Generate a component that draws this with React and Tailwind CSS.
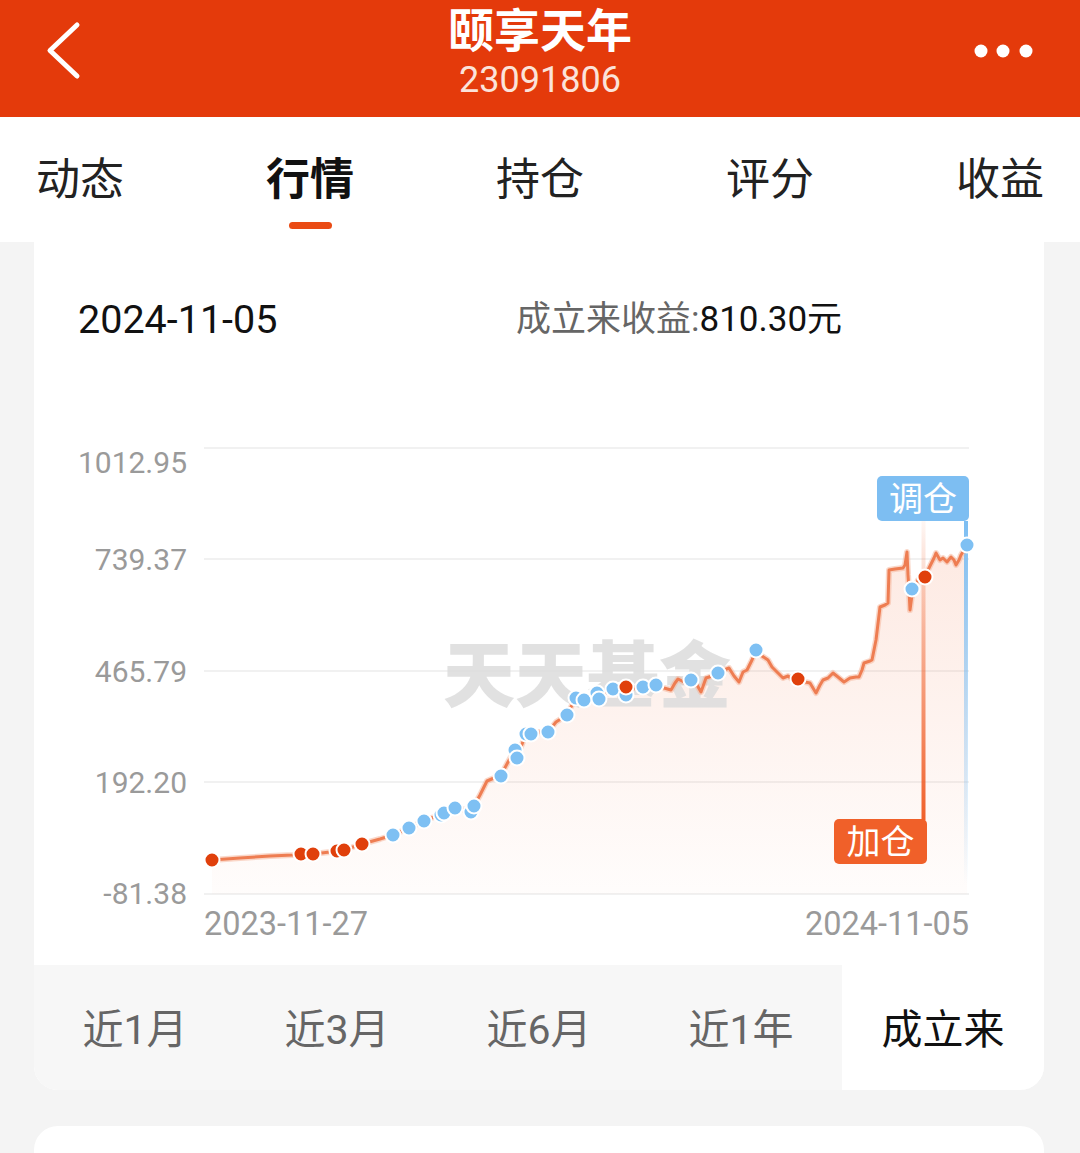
import React from "react";

const FONT = { fontFamily: 'Roboto, "Noto Sans CJK SC", sans-serif' };

const tabs = ["动态", "行情", "持仓", "评分", "收益"];
const ranges = ["近1月", "近3月", "近6月", "近1年", "成立来"];

// curve points in page pixels
const line = [
  [212, 860], [240, 858], [270, 856], [293, 855], [301, 854], [313, 854], [330, 852], [337, 851],
  [344, 850], [362, 844], [380, 839], [393, 835], [409, 828], [424, 821], [444, 813], [455, 808],
  [466, 810], [474, 806], [480, 795], [487, 781], [501, 775], [508, 762], [515, 750], [517, 757],
  [526, 734], [531, 734], [540, 732], [548, 732], [556, 722], [567, 715], [572, 705], [576, 698],
  [584, 700], [592, 696], [599, 699], [605, 692], [613, 689], [626, 688], [635, 688], [643, 687],
  [656, 685], [664, 688], [671, 690], [675, 683], [678, 679], [684, 682], [691, 680], [697, 685],
  [701, 692], [706, 678], [712, 676], [718, 673], [724, 670], [729, 668], [734, 676], [739, 682],
  [743, 672], [747, 670], [752, 660], [756, 650], [762, 656], [768, 660], [772, 667], [778, 673],
  [783, 678], [788, 676], [793, 680], [798, 679], [805, 682], [810, 683], [813, 688], [816, 693],
  [820, 685], [823, 680], [828, 678], [833, 673], [838, 677], [844, 682], [850, 678], [856, 677],
  [859, 677], [862, 670], [864, 663], [870, 661], [872, 660], [876, 640], [880, 607], [885, 605],
  [888, 603], [889, 570], [895, 569], [903, 568], [905, 565], [907, 552], [908, 575], [909, 590],
  [910, 610], [912, 595], [916, 585], [918, 580], [925, 577], [928, 570], [930, 566], [934, 558],
  [936, 553], [940, 560], [943, 558], [947, 562], [951, 557], [954, 560], [956, 565], [959, 560],
  [961, 555], [967, 545],
];

const redDots = [[212, 860], [301, 854], [313, 854], [337, 851], [344, 850], [362, 844], [626, 687], [798, 679], [925, 577]];
const blueDots = [
  [393, 835], [409, 828], [424, 821], [441, 815], [444, 813], [455, 808], [471, 812], [474, 806],
  [501, 776], [515, 750], [517, 758], [526, 734], [531, 734], [548, 732], [567, 715], [576, 698],
  [584, 700], [597, 693], [599, 699], [613, 689], [626, 695], [643, 687], [656, 685], [691, 680],
  [718, 673], [756, 650], [912, 589], [967, 545],
];

const yLabels = [
  ["1012.95", 473],
  ["739.37", 570],
  ["465.79", 682],
  ["192.20", 793],
  ["-81.38", 904],
];
const grid = [448, 559, 671, 782, 894];

const Chart = () => {
  const pts = line.map((p) => p.join(",")).join(" ");
  const area = `212,894 ${pts} 967,894`;
  return (
    <svg width="1010" height="567" viewBox="34 398 1010 567" className="block">
      <defs>
        <linearGradient id="fillG" x1="0" y1="540" x2="0" y2="894" gradientUnits="userSpaceOnUse">
          <stop offset="0" stopColor="#f4784a" stopOpacity="0.16" />
          <stop offset="1" stopColor="#f4784a" stopOpacity="0.02" />
        </linearGradient>
        <linearGradient id="orangeV" x1="0" y1="521" x2="0" y2="820" gradientUnits="userSpaceOnUse">
          <stop offset="0" stopColor="#f0602a" stopOpacity="0.05" />
          <stop offset="0.4" stopColor="#f0602a" stopOpacity="0.45" />
          <stop offset="1" stopColor="#f0602a" stopOpacity="1" />
        </linearGradient>
        <linearGradient id="blueV" x1="0" y1="521" x2="0" y2="885" gradientUnits="userSpaceOnUse">
          <stop offset="0" stopColor="#7dbef2" stopOpacity="1" />
          <stop offset="1" stopColor="#7dbef2" stopOpacity="0" />
        </linearGradient>
      </defs>

      {grid.map((y) => (
        <line key={y} x1="204" x2="969" y1={y} y2={y} stroke="#ededed" strokeWidth="1.5" />
      ))}
      {yLabels.map(([t, y]) => (
        <text key={t} x="187" y={y} textAnchor="end" fontSize="30" fill="#9a9a9a" style={FONT}>
          {t}
        </text>
      ))}
      <text x="204" y="935" fontSize="32.5" fill="#9a9a9a" style={FONT}>2023-11-27</text>
      <text x="969" y="935" fontSize="32.5" fill="#9a9a9a" textAnchor="end" style={FONT}>2024-11-05</text>

      <polygon points={area} fill="url(#fillG)" />

      <text
        x="443"
        y="701"
        fontSize="72"
        fontWeight="900"
        fill="#dcdcdc"
        fillOpacity="0.85"
        style={{ fontFamily: '"Noto Sans CJK SC", serif' }}
      >
        天天基金
      </text>

      <rect x="921.5" y="521" width="4" height="299" fill="url(#orangeV)" />
      <rect x="964" y="521" width="4" height="364" fill="url(#blueV)" />

      <polyline points={pts} fill="none" stroke="#f6b196" strokeOpacity="0.5" strokeWidth="6" strokeLinejoin="round" />
      <polyline points={pts} fill="none" stroke="#ee7d52" strokeWidth="3" strokeLinejoin="round" />

      {blueDots.map(([x, y], i) => (
        <circle key={"b" + i} cx={x} cy={y} r="7.5" fill="#7ec0f3" stroke="#fff" strokeWidth="2" />
      ))}
      {redDots.map(([x, y], i) => (
        <circle key={"r" + i} cx={x} cy={y} r="7.5" fill="#e0400c" stroke="#fff" strokeWidth="2" />
      ))}

      <rect x="877" y="476" width="92" height="45" rx="5" fill="#7dbef2" />
      <text x="923" y="511" textAnchor="middle" fontSize="34" fill="#fff" style={FONT}>调仓</text>

      <rect x="834" y="819" width="93" height="45" rx="5" fill="#f06029" />
      <text x="880.5" y="854" textAnchor="middle" fontSize="34" fill="#fff" style={FONT}>加仓</text>
    </svg>
  );
};

const App = () => {
  return (
    <div className="w-[1080px] h-[1153px] overflow-hidden bg-[#f4f4f4]" style={FONT}>
      {/* top bar */}
      <div className="h-[117px] bg-[#e43a0b] grid grid-cols-[1fr_auto_1fr] text-white">
        <div className="pl-[44px] pt-[20px]">
          <svg width="40" height="62" viewBox="0 0 40 62">
            <path d="M33 5 L6 30.5 L33 56" fill="none" stroke="#fff" strokeWidth="5" strokeLinecap="round" strokeLinejoin="round" />
          </svg>
        </div>
        <div className="flex flex-col items-center pt-[6px]">
          <div className="text-[46px] leading-[50px] font-bold">颐享天年</div>
          <div className="text-[36px] leading-[48px] text-[#fbe3da]">23091806</div>
        </div>
        <div className="flex justify-end pr-[46px] pt-[44px]">
          <svg width="60" height="14" viewBox="0 0 60 14">
            <circle cx="7" cy="7" r="6.5" fill="#fff" />
            <circle cx="29" cy="7" r="6.5" fill="#fff" />
            <circle cx="52" cy="7" r="6.5" fill="#fff" />
          </svg>
        </div>
      </div>

      {/* tab bar */}
      <div className="h-[125px] bg-white px-[36px] flex justify-between">
        {tabs.map((t) => {
          const active = t === "行情";
          return (
            <div key={t} className="flex flex-col items-center pt-[36px]">
              <div className={`text-[44px] leading-[54px] ${active ? "font-bold text-[#111]" : "text-[#222]"}`}>{t}</div>
              {active && <div className="mt-[15px] h-[7px] w-[43px] rounded-full bg-[#ea4b14]" />}
            </div>
          );
        })}
      </div>

      {/* chart card */}
      <div className="ml-[34px] w-[1010px] bg-white rounded-b-[24px]">
        <div className="h-[156px] flex items-center pl-[44px]">
          <div className="w-[438px] text-[39.5px] text-[#111]">2024-11-05</div>
          <div className="text-[35px]">
            <span className="text-[#666]">成立来收益:</span>
            <span className="text-[#111]">810.30元</span>
          </div>
        </div>
        <Chart />
        <div className="grid grid-cols-5 h-[125px] bg-[#f7f7f7] rounded-b-[24px] overflow-hidden">
          {ranges.map((r) => {
            const active = r === "成立来";
            return (
              <div
                key={r}
                className={`flex items-center justify-center pt-[6px] text-[41px] ${active ? "bg-white text-[#111]" : "text-[#666]"}`}
              >
                {r}
              </div>
            );
          })}
        </div>
      </div>

      <div className="ml-[34px] w-[1010px] mt-[36px] h-[60px] bg-white rounded-t-[24px]" />
    </div>
  );
};

export default App;
